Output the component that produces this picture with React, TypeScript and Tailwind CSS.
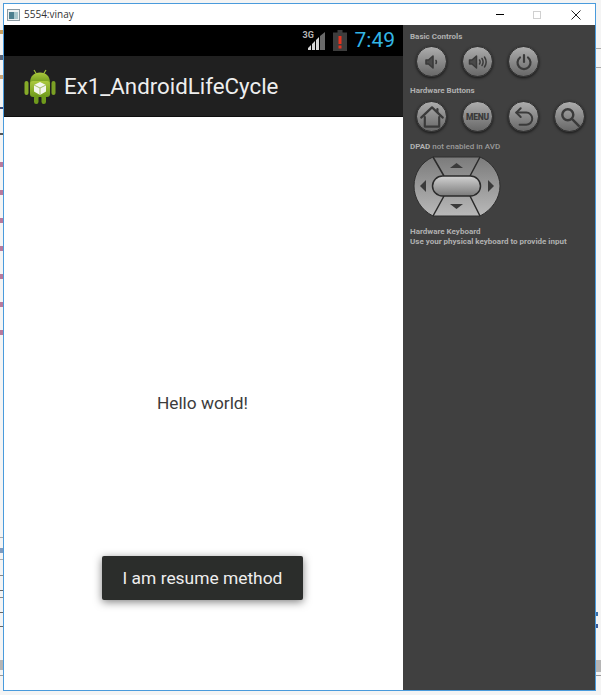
const Round = ({ children }: { children: React.ReactNode }) => (
  <div className="flex h-[31px] w-[31px] items-center justify-center rounded-full border border-[#333] bg-linear-to-b from-[#adadad] via-[#8a8a8a] to-[#686868] shadow-[0_1px_3px_rgba(0,0,0,0.7)]">
    {children}
  </div>
)

const ic = {
  width: 20,
  height: 20,
  viewBox: "0 0 20 20",
  fill: "none",
  stroke: "#3a3a3a",
  strokeWidth: 1.6,
  strokeLinecap: "round" as const,
  strokeLinejoin: "round" as const,
}

const Android = () => (
  <svg width="32" height="37" viewBox="0 0 32 37">
    <defs>
      <linearGradient id="droid" x1="0" y1="0" x2="0" y2="1">
        <stop offset="0" stopColor="#abc93e" />
        <stop offset="1" stopColor="#6f9a1c" />
      </linearGradient>
    </defs>
    <path d="M10 2l2.500 4M22 2l-2.500 4" stroke="#a0bf38" strokeWidth="1.200" />
    <path d="M6 15C6 8 10 4.500 16 4.500S26 8 26 15z" fill="url(#droid)" />
    <rect x="6" y="13" width="20" height="16" rx="3" fill="url(#droid)" />
    <rect x="0.500" y="13" width="4" height="14" rx="2" fill="#86ab28" />
    <rect x="27.500" y="13" width="4" height="14" rx="2" fill="#7ba024" />
    <rect x="10" y="27" width="4.500" height="9" rx="2.200" fill="#6f9a1c" />
    <rect x="17.500" y="27" width="4.500" height="9" rx="2.200" fill="#6f9a1c" />
    <path d="M16 14l6 3v6.500l-6 3.500-6-3.500V17z" fill="#f4f6ee" />
    <path d="M10 17l6 3 6-3M16 20v7" stroke="#9db85a" strokeWidth="0.900" fill="none" />
  </svg>
)

const Dpad = () => (
  <svg width="88" height="61" viewBox="0 0 88 61" className="ml-[3px]">
    <defs>
      <linearGradient id="pad" x1="0" y1="0" x2="0" y2="1">
        <stop offset="0" stopColor="#7b7b7b" />
        <stop offset="0.500" stopColor="#9a9a9a" />
        <stop offset="1" stopColor="#b9b9b9" />
      </linearGradient>
      <linearGradient id="pill" x1="0" y1="0" x2="0" y2="1">
        <stop offset="0" stopColor="#d2d2d2" />
        <stop offset="1" stopColor="#7a7a7a" />
      </linearGradient>
    </defs>
    <path
      d="M20 1H67C79 6 87 18 87 30S79 54 67 60H20C8 54 1 42 1 30S8 6 20 1z"
      fill="url(#pad)"
      stroke="#2e2e2e"
      strokeWidth="1"
    />
    <path d="M20 1L31 20M67 1L57 20M31 40L20 60M57 40L67 60" stroke="#2b2b2b" strokeWidth="1.500" />
    <rect x="19.500" y="20" width="48" height="20" rx="10" fill="url(#pill)" stroke="#2b2b2b" strokeWidth="1.500" />
    <path d="M37 12l6.500-5 6.500 5z" fill="#3a3a3a" />
    <path d="M37 48h13l-6.500 5z" fill="#3a3a3a" />
    <path d="M13 24v12l-6-6z" fill="#3a3a3a" />
    <path d="M75 24v12l6-6z" fill="#3a3a3a" />
  </svg>
)

export default function App() {
  return (
    <div className="flex h-[695px] w-[601px] overflow-hidden bg-[#f4f4f4] pt-[3px] [font-family:Roboto,sans-serif]">
      {/* bits of the windows behind the emulator */}
      <div className="-mt-[3px] flex w-[3px] shrink-0 flex-col">
        <div className="mt-[30px] h-[4px] bg-[#c9a060]" />
        <div className="mt-[21px] h-[5px] bg-[#5a6578]" />
        <div className="mt-[15px] h-[4px] bg-[#c9a67a]" />
        <div className="mt-[28px] h-[2px] bg-[#3c4a76]" />
        <div className="mt-[24px] h-[2px] bg-[#555]" />
        <div className="mt-[27px] flex flex-col gap-[23px]">
          <div className="h-[5px] bg-[#b87a9c]" />
          <div className="h-[5px] bg-[#b87a9c]" />
          <div className="h-[5px] bg-[#b87a9c]" />
          <div className="h-[5px] bg-[#b87a9c]" />
          <div className="h-[5px] bg-[#b87a9c]" />
          <div className="h-[5px] bg-[#b87a9c]" />
          <div className="h-[5px] bg-[#b87a9c]" />
        </div>
        <div className="mt-[202px] h-px bg-[#aaa]" />
        <div className="mt-[10px] h-[5px] bg-[#7f9cc0]" />
        <div className="mt-[6px] h-px bg-[#aaa]" />
        <div className="mt-[15px] h-px bg-[#888]" />
        <div className="mt-[14px] h-px bg-[#666]" />
        <div className="mt-[6px] h-px bg-[#888]" />
        <div className="mt-[14px] h-px bg-[#666]" />
        <div className="mt-[13px] h-px bg-[#666]" />
        <div className="mt-[33px] h-[10px] bg-[#b5b5b5]" />
        <div className="mt-[5px] h-px bg-[#999]" />
      </div>

      <div className="flex h-[688px] w-[593px] shrink-0 flex-col border border-[#4a9bdc]">
        <div className="flex h-[21px] shrink-0 items-center bg-white pl-[2px]">
          <svg width="13" height="12" viewBox="0 0 13 12" className="ml-[1px]">
            <rect x="0.500" y="0.500" width="12" height="11" fill="#eef1f2" stroke="#8b9aa3" />
            <rect x="2" y="3" width="5" height="7" fill="#4d7f8f" />
            <rect x="7" y="3" width="4" height="7" fill="#a9c6cc" />
          </svg>
          <span className="ml-[4px] text-[10px] text-[#333] [font-family:'Open_Sans',sans-serif]">5554:vinay</span>
          <div className="ml-auto flex items-center pr-[14px]">
            <div className="h-px w-[8px] bg-black" />
            <div className="ml-[29px] h-[8px] w-[8px] border border-[#d0d0d0]" />
            <svg width="10" height="10" viewBox="0 0 10 10" className="ml-[30px]">
              <path d="M0.500 0.500l9 9M9.500 0.500l-9 9" stroke="#222" strokeWidth="1" />
            </svg>
          </div>
        </div>

        <div className="flex min-h-0 flex-1">
          <div className="flex w-[399px] shrink-0 flex-col">
            <div className="flex h-[31px] shrink-0 items-center justify-end bg-black pr-[8px]">
              <div className="relative h-[18px] w-[17px]">
                <span className="absolute -left-[5px] -top-[2px] text-[9px] font-bold leading-[10px] text-[#b5b5b5]">3G</span>
                <svg width="17" height="18" viewBox="0 0 17 18" className="absolute left-0 top-0">
                  <path d="M0 18v-2l3-3v5zM4 18v-6l3-3v9zM8 18V8l3-3v13z" fill="#d6d6d6" />
                  <path d="M12 18V4l5-4v18z" fill="#6a6a6a" />
                </svg>
              </div>
              <svg width="14" height="21" viewBox="0 0 14 21" className="ml-[8px]">
                <path d="M4.500 0h5v2.500H14V21H0V2.500h4.500z" fill="#3d3d3d" />
                <rect x="5.500" y="6" width="3" height="8" fill="#e8321e" />
                <rect x="5.500" y="15.500" width="3" height="3" fill="#e8321e" />
              </svg>
              <span className="ml-[8px] text-[21px] leading-none text-[#33b5e5]">7:49</span>
            </div>

            <div className="flex h-[61px] shrink-0 items-center border-b border-[#0e0e0e] bg-[#202020] pl-[20px]">
              <Android />
              <span className="ml-[8px] pt-[2px] text-[22.3px] text-[#eeeeee]">Ex1_AndroidLifeCycle</span>
            </div>

            <div className="relative flex flex-1 items-center justify-center bg-white pt-[1px] pr-[2px]">
              <span className="text-[17.3px] text-[#3c3c3c]">Hello world!</span>
              <div className="absolute bottom-[90px] left-[98px] flex h-[44px] w-[201px] items-center justify-center rounded-[2px] bg-[#2b2d2b] pt-px text-[17.4px] text-[#eeeeee] shadow-[0_2px_8px_rgba(0,0,0,0.5)]">
                I am resume method
              </div>
            </div>
          </div>

          <div className="flex flex-1 flex-col bg-[#404040] px-[7px] pt-[7px] text-[8px] font-bold leading-[10px] text-[#b0b0b0]">
            <span>Basic Controls</span>
            <div className="mt-[4px] ml-[6px] flex gap-[15px]">
              <Round>
                <svg {...ic}>
                  <path d="M4 8v4h2.500l4.500 4V4L6.500 8z" fill="#4a4a4a" />
                  <path d="M14 8.500c.6 1 .6 2 0 3" />
                </svg>
              </Round>
              <Round>
                <svg {...ic} strokeWidth={1.5}>
                  <path d="M1.500 8v4h2.500l4.500 4V4L4 8z" fill="#4a4a4a" />
                  <path d="M11.500 8c.8 1.300.8 2.700 0 4M14 6.500c1.400 2.200 1.400 4.800 0 7M16.500 5c2 3 2 7 0 10" />
                </svg>
              </Round>
              <Round>
                <svg {...ic} strokeWidth={2.2}>
                  <path d="M10 3v7" />
                  <path d="M6 5.500a6.500 6.500 0 1 0 8 0" />
                </svg>
              </Round>
            </div>

            <span className="mt-[9px]">Hardware Buttons</span>
            <div className="mt-[5px] ml-[6px] flex gap-[15px]">
              <Round>
                <svg {...ic} width={24} height={24} strokeWidth={1.8}>
                  <path d="M1 10.500L10 2l9 8.500" />
                  <path d="M4 10v8h12v-8" />
                  <path d="M14.500 3.500V6" />
                </svg>
              </Round>
              <Round>
                <span className="text-[8.5px] font-black tracking-[-0.2px] text-[#3a3a3a]">MENU</span>
              </Round>
              <Round>
                <svg {...ic} width={22} height={22} strokeWidth={1.8}>
                  <path d="M7 2L3 6l4 4" />
                  <path d="M3 6h9a5.500 5.500 0 0 1 0 11H6" />
                </svg>
              </Round>
              <Round>
                <svg {...ic} width={22} height={22} strokeWidth={2.2}>
                  <circle cx="8" cy="8" r="5" />
                  <path d="M12 12l6 6" />
                </svg>
              </Round>
            </div>

            <span className="mt-[10px]">
              DPAD <span className="font-medium text-[#9a9a9a]">not enabled in AVD</span>
            </span>
            <div className="mt-[4px]">
              <Dpad />
            </div>

            <span className="mt-[10px]">Hardware Keyboard</span>
            <span>Use your physical keyboard to provide input</span>
          </div>
        </div>
      </div>

      <div className="flex flex-1 flex-col">
        <div className="mt-[45px] h-px bg-[#aaa]" />
        <div className="mt-[18px] h-px bg-[#aaa]" />
        <div className="mt-[544px] h-[4px] w-[2px] bg-[#3a6ea8]" />
        <div className="mt-[8px] h-[4px] w-[2px] bg-[#3a5a98]" />
        <div className="mt-[32px] h-[12px] bg-[#b5b5b5]" />
        <div className="mt-[3px] h-px bg-[#999]" />
      </div>
    </div>
  )
}
